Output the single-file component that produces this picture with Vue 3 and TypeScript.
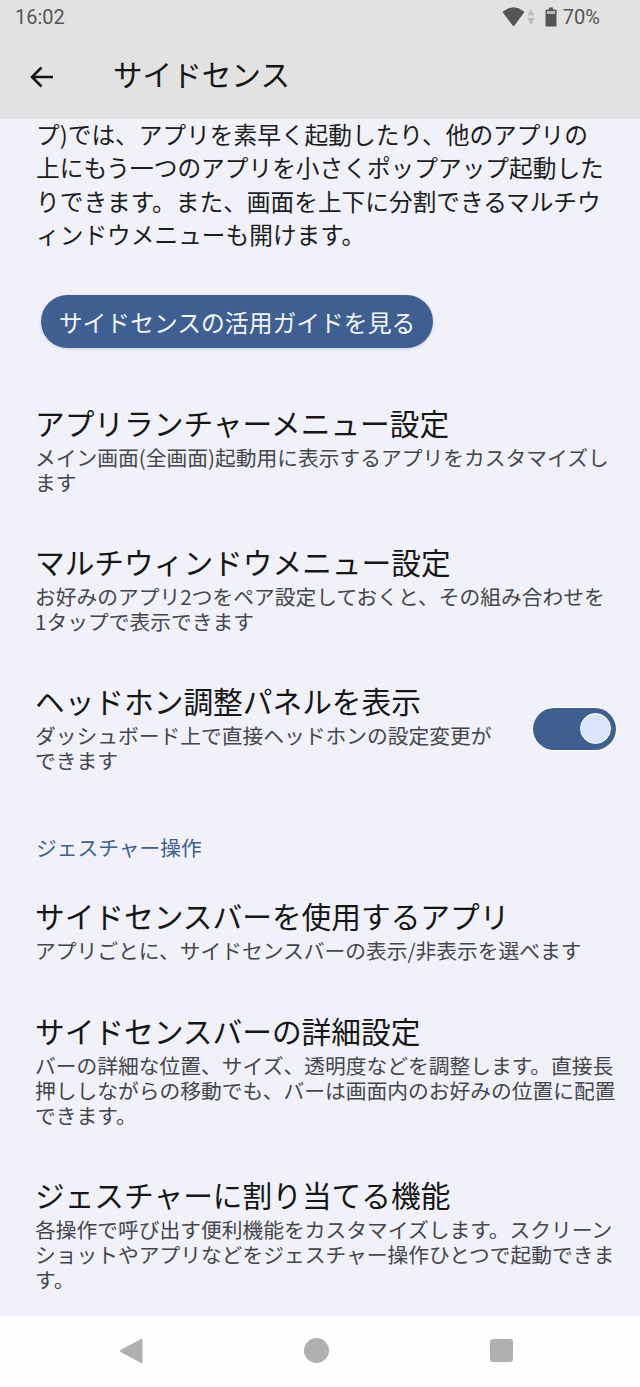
<script setup lang="ts">
interface Row {
  title: string
  lines: string[]
}
const top: Row[] = [
  { title: 'アプリランチャーメニュー設定', lines: ['メイン画面(全画面)起動用に表示するアプリをカスタマイズし', 'ます'] },
  { title: 'マルチウィンドウメニュー設定', lines: ['お好みのアプリ2つをペア設定しておくと、その組み合わせを', '1タップで表示できます'] },
]
const gesture: Row[] = [
  { title: 'サイドセンスバーを使用するアプリ', lines: ['アプリごとに、サイドセンスバーの表示/非表示を選べます'] },
  { title: 'サイドセンスバーの詳細設定', lines: ['バーの詳細な位置、サイズ、透明度などを調整します。直接長', '押ししながらの移動でも、バーは画面内のお好みの位置に配置', 'できます。'] },
  { title: 'ジェスチャーに割り当てる機能', lines: ['各操作で呼び出す便利機能をカスタマイズします。スクリーン', 'ショットやアプリなどをジェスチャー操作ひとつで起動できま', 'す。'] },
]
const intro = [
  'プ)では、アプリを素早く起動したり、他のアプリの',
  '上にもう一つのアプリを小さくポップアップ起動した',
  'りできます。また、画面を上下に分割できるマルチウ',
  'ィンドウメニューも開けます。',
]
</script>

<template>
  <div class="screen">
    <header class="head">
      <div class="status">
        <span class="time">16:02</span>
        <div class="indicators">
          <svg class="wifi" width="24" height="20" viewBox="0 0 24 20">
            <path d="M1 5 Q11.5 -3.5 22 5 L11.5 19 Z" fill="#555" stroke="#555" stroke-width="1" stroke-linejoin="round" />
          </svg>
          <svg class="arrows" width="8" height="20" viewBox="0 0 8 20">
            <path d="M4 2 L7.5 8.5 H0.5 Z M4 18.5 L7.5 11 H0.5 Z" fill="#bdbdbd" />
          </svg>
          <svg class="battery" width="12" height="20" viewBox="0 0 12 20">
            <path d="M4 0.5 H8 V2.5 H10.5 Q11.5 2.5 11.5 3.5 V18.5 Q11.5 19.5 10.5 19.5 H1.5 Q0.5 19.5 0.5 18.5 V3.5 Q0.5 2.5 1.5 2.5 H4 Z" fill="#555" />
            <rect x="2" y="4" width="8" height="3" fill="#b9b9b9" />
          </svg>
          <span class="pct">70%</span>
        </div>
      </div>
      <div class="toolbar">
        <svg class="back" width="26" height="24" viewBox="0 0 26 24">
          <path d="M24 12 H3 M12.5 2.5 L3 12 L12.5 21.5" fill="none" stroke="#161616" stroke-width="2.6" />
        </svg>
        <h1 class="title">サイドセンス</h1>
      </div>
    </header>

    <main class="content">
      <p class="intro"><span v-for="l in intro" :key="l" class="line">{{ l }}</span></p>
      <div class="btn-wrap"><button class="guide" type="button">サイドセンスの活用ガイドを見る</button></div>

      <section v-for="(r, i) in top" :key="r.title" class="row" :class="{ first: i === 0 }">
        <div class="t">{{ r.title }}</div>
        <div class="s"><span v-for="l in r.lines" :key="l" class="line">{{ l }}</span></div>
      </section>

      <section class="row toggle-row">
        <div>
          <div class="t">ヘッドホン調整パネルを表示</div>
          <div class="s"><span class="line">ダッシュボード上で直接ヘッドホンの設定変更が</span><span class="line">できます</span></div>
        </div>
        <div class="switch"><span class="knob"></span></div>
      </section>

      <div class="cat">ジェスチャー操作</div>

      <section v-for="(r, i) in gesture" :key="r.title" class="row" :class="{ afterCat: i === 0 }">
        <div class="t">{{ r.title }}</div>
        <div class="s"><span v-for="l in r.lines" :key="l" class="line">{{ l }}</span></div>
      </section>
    </main>

    <nav class="nav">
      <svg width="24" height="26" viewBox="0 0 24 26">
        <path d="M22.5 2 L2 13 L22.5 24 Z" fill="#b0b0b0" stroke="#b0b0b0" stroke-width="2" stroke-linejoin="round" />
      </svg>
      <span class="circle"></span>
      <span class="square"></span>
    </nav>
  </div>
</template>

<style>
html, body { margin: 0; background: #f0f1f9; }
</style>

<style scoped>
.screen {
  width: 640px;
  height: 1387px;
  display: flex;
  flex-direction: column;
  overflow: hidden;
  font-family: "Noto Sans CJK JP", Roboto, sans-serif;
  background: #f0f1f9;
  color: #161616;
}
.head { height: 119px; flex: none; background: #e2e2e2; }
.status {
  height: 34px;
  display: flex;
  align-items: center;
  justify-content: space-between;
  padding: 0 40px 0 15px;
  color: #555;
  font-family: Roboto, sans-serif;
  font-size: 20px;
}
.indicators { display: flex; align-items: center; }
.wifi { margin-right: 1px; }
.arrows { margin-right: 10px; }
.battery { margin-right: 6px; }
.toolbar { height: 85px; display: flex; align-items: center; padding: 0 0 0 29px; box-sizing: border-box; }
.back { margin-right: 58px; flex: none; }
.title { margin: 0 0 6px; font-size: 29.6px; font-weight: 400; line-height: 40px; }
.content { flex: 1; overflow: hidden; min-height: 0; }
.line { display: block; white-space: nowrap; }
.intro {
  margin: -1px 0 0;
  padding-left: 36px;
  font-size: 23.7px;
  line-height: 33.3px;
  color: #1d1d1d;
}
.btn-wrap { padding: 44px 0 0 41px; }
.guide {
  display: block;
  width: 392px;
  height: 53px;
  padding: 0;
  border: 0;
  border-radius: 27px;
  background: #3e5f92;
  color: #f4f6fb;
  font: inherit;
  font-size: 23.8px;
  box-shadow: 0 1px 3px rgba(40, 50, 90, 0.18);
}
.row { padding-left: 35px; margin-top: 47px; }
.row.first { margin-top: 55px; }
.row.afterCat { margin-top: 35px; }
.row.afterCat + .row { margin-top: 48px; }
.t { font-size: 29.7px; line-height: 40px; color: #161616; }
.s { font-size: 20.75px; line-height: 25px; color: #45464c; margin-top: 2px; }
.toggle-row { display: flex; align-items: center; justify-content: space-between; padding-right: 24px; }
.switch {
  width: 83px;
  height: 42px;
  margin-top: 3px;
  border-radius: 21px;
  background: #3e5f92;
  display: flex;
  align-items: center;
  justify-content: flex-end;
  padding-right: 5px;
  box-sizing: border-box;
  box-shadow: 0 0 0 1px #fff;
}
.knob { width: 31px; height: 31px; box-sizing: border-box; border-radius: 50%; background: #dae4fb; border: 1px solid #fff; }
.cat { margin: 60px 0 0 36px; font-size: 20.75px; line-height: 28px; color: #3e5f92; }
.nav {
  height: 71px;
  flex: none;
  background: #fefefe;
  display: flex;
  align-items: center;
  padding: 0 0 2px 119px;
  box-sizing: border-box;
}
.circle { width: 25px; height: 25px; border-radius: 50%; background: #b0b0b0; margin-left: 161px; }
.square { width: 23px; height: 23px; border-radius: 3px; background: #b0b0b0; margin-left: 161px; }
</style>
